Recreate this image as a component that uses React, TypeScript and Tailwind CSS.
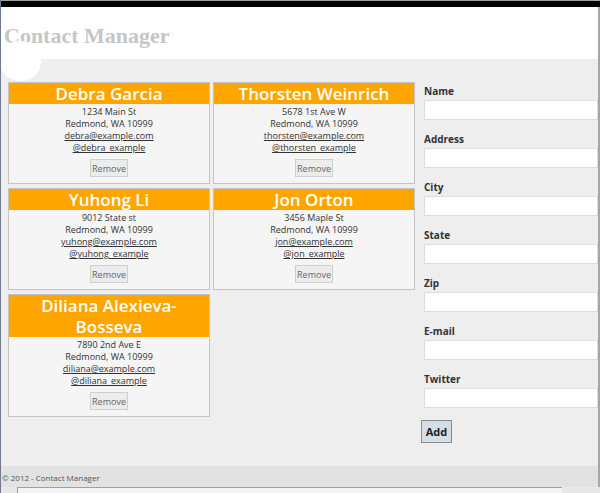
import React from "react";

interface Contact {
  name: string;
  address: string;
  city: string;
  email: string;
  twitter: string;
}

const contacts: Contact[] = [
  { name: "Debra Garcia", address: "1234 Main St", city: "Redmond, WA 10999", email: "debra@example.com", twitter: "@debra_example" },
  { name: "Thorsten Weinrich", address: "5678 1st Ave W", city: "Redmond, WA 10999", email: "thorsten@example.com", twitter: "@thorsten_example" },
  { name: "Yuhong Li", address: "9012 State st", city: "Redmond, WA 10999", email: "yuhong@example.com", twitter: "@yuhong_example" },
  { name: "Jon Orton", address: "3456 Maple St", city: "Redmond, WA 10999", email: "jon@example.com", twitter: "@jon_example" },
  { name: "Diliana Alexieva-Bosseva", address: "7890 2nd Ave E", city: "Redmond, WA 10999", email: "diliana@example.com", twitter: "@diliana_example" },
];

const fields = ["Name", "Address", "City", "State", "Zip", "E-mail", "Twitter"];

function ContactCard({ c }: { c: Contact }) {
  return (
    <div className="w-[202px] self-start border border-[#c4c4c4] bg-[#f5f5f5] text-center">
      <div className="bg-[#ffa500] px-2 text-[17px] leading-[21px] font-semibold text-white">{c.name}</div>
      <div className="pt-[2px] text-[9px] leading-[12px] text-[#333]">
        <div>{c.address}</div>
        <div>{c.city}</div>
        <div><a className="underline">{c.email}</a></div>
        <div><a className="underline">{c.twitter}</a></div>
      </div>
      <div className="flex justify-center pt-[5px] pb-[6px]">
        <button className="h-[18px] w-[38px] border border-[#cfcfcf] bg-[#ececec] text-[9px] leading-none text-[#666]">Remove</button>
      </div>
    </div>
  );
}

export default function App() {
  return (
    <div
      className="relative flex h-[493px] w-[600px] flex-col overflow-hidden border-l border-[#6d7b8d] bg-[#eeeeee]"
      style={{ fontFamily: '"Open Sans", "Noto Sans", sans-serif' }}
    >
      <div className="h-[7px] shrink-0 border-t border-[#9aa0a8] bg-black" />
      <div className="relative h-[52px] shrink-0 bg-white border-r-2 border-[#a6a6a6]">
        <h1
          className="pl-[3px] pt-[16px] text-[22px] leading-[25px] font-bold text-[#c6c6c6]"
          style={{ fontFamily: '"Liberation Serif", serif' }}
        >
          Contact Manager
        </h1>
        <div className="absolute left-[-1px] top-[34px] h-[40px] w-[41px] rounded-full bg-white" />
      </div>
      <div className="flex flex-1 border-r-2 border-[#a6a6a6]">
        <div className="ml-[7px] mt-[23px] grid grid-cols-[202px_202px] content-start gap-x-[3px] gap-y-[4px]">
          {contacts.map(c => (
            <ContactCard key={c.name} c={c} />
          ))}
        </div>
        <div className="ml-[9px] mt-[26px] flex-1">
          {fields.map(f => (
            <div key={f} className="mb-[13px]">
              <div className="mb-[3px] text-[10px] leading-[12px] font-bold text-[#333]">{f}</div>
              <div className="h-[20px] border border-[#dddddd] bg-white" />
            </div>
          ))}
          <button className="ml-[-3px] mt-[-1px] block h-[23px] w-[31px] border border-[#8a8a8a] bg-[#d4dee6] text-[11px] leading-none font-bold text-[#222]">
            Add
          </button>
        </div>
      </div>
      <div className="h-[21px] shrink-0 border-r-2 border-[#a6a6a6] bg-[#e2e2e2] pl-[1px] pt-[7px] text-[8px] leading-[10px] text-[#555]">
        © 2012 - Contact Manager
      </div>
      <div className="flex h-[6px] shrink-0 bg-[#e8e8e8]">
        <div className="ml-[16px] w-[545px] border-t border-l border-[#a0a0a0] bg-[#f4f4f4]" />
      </div>
    </div>
  );
}
